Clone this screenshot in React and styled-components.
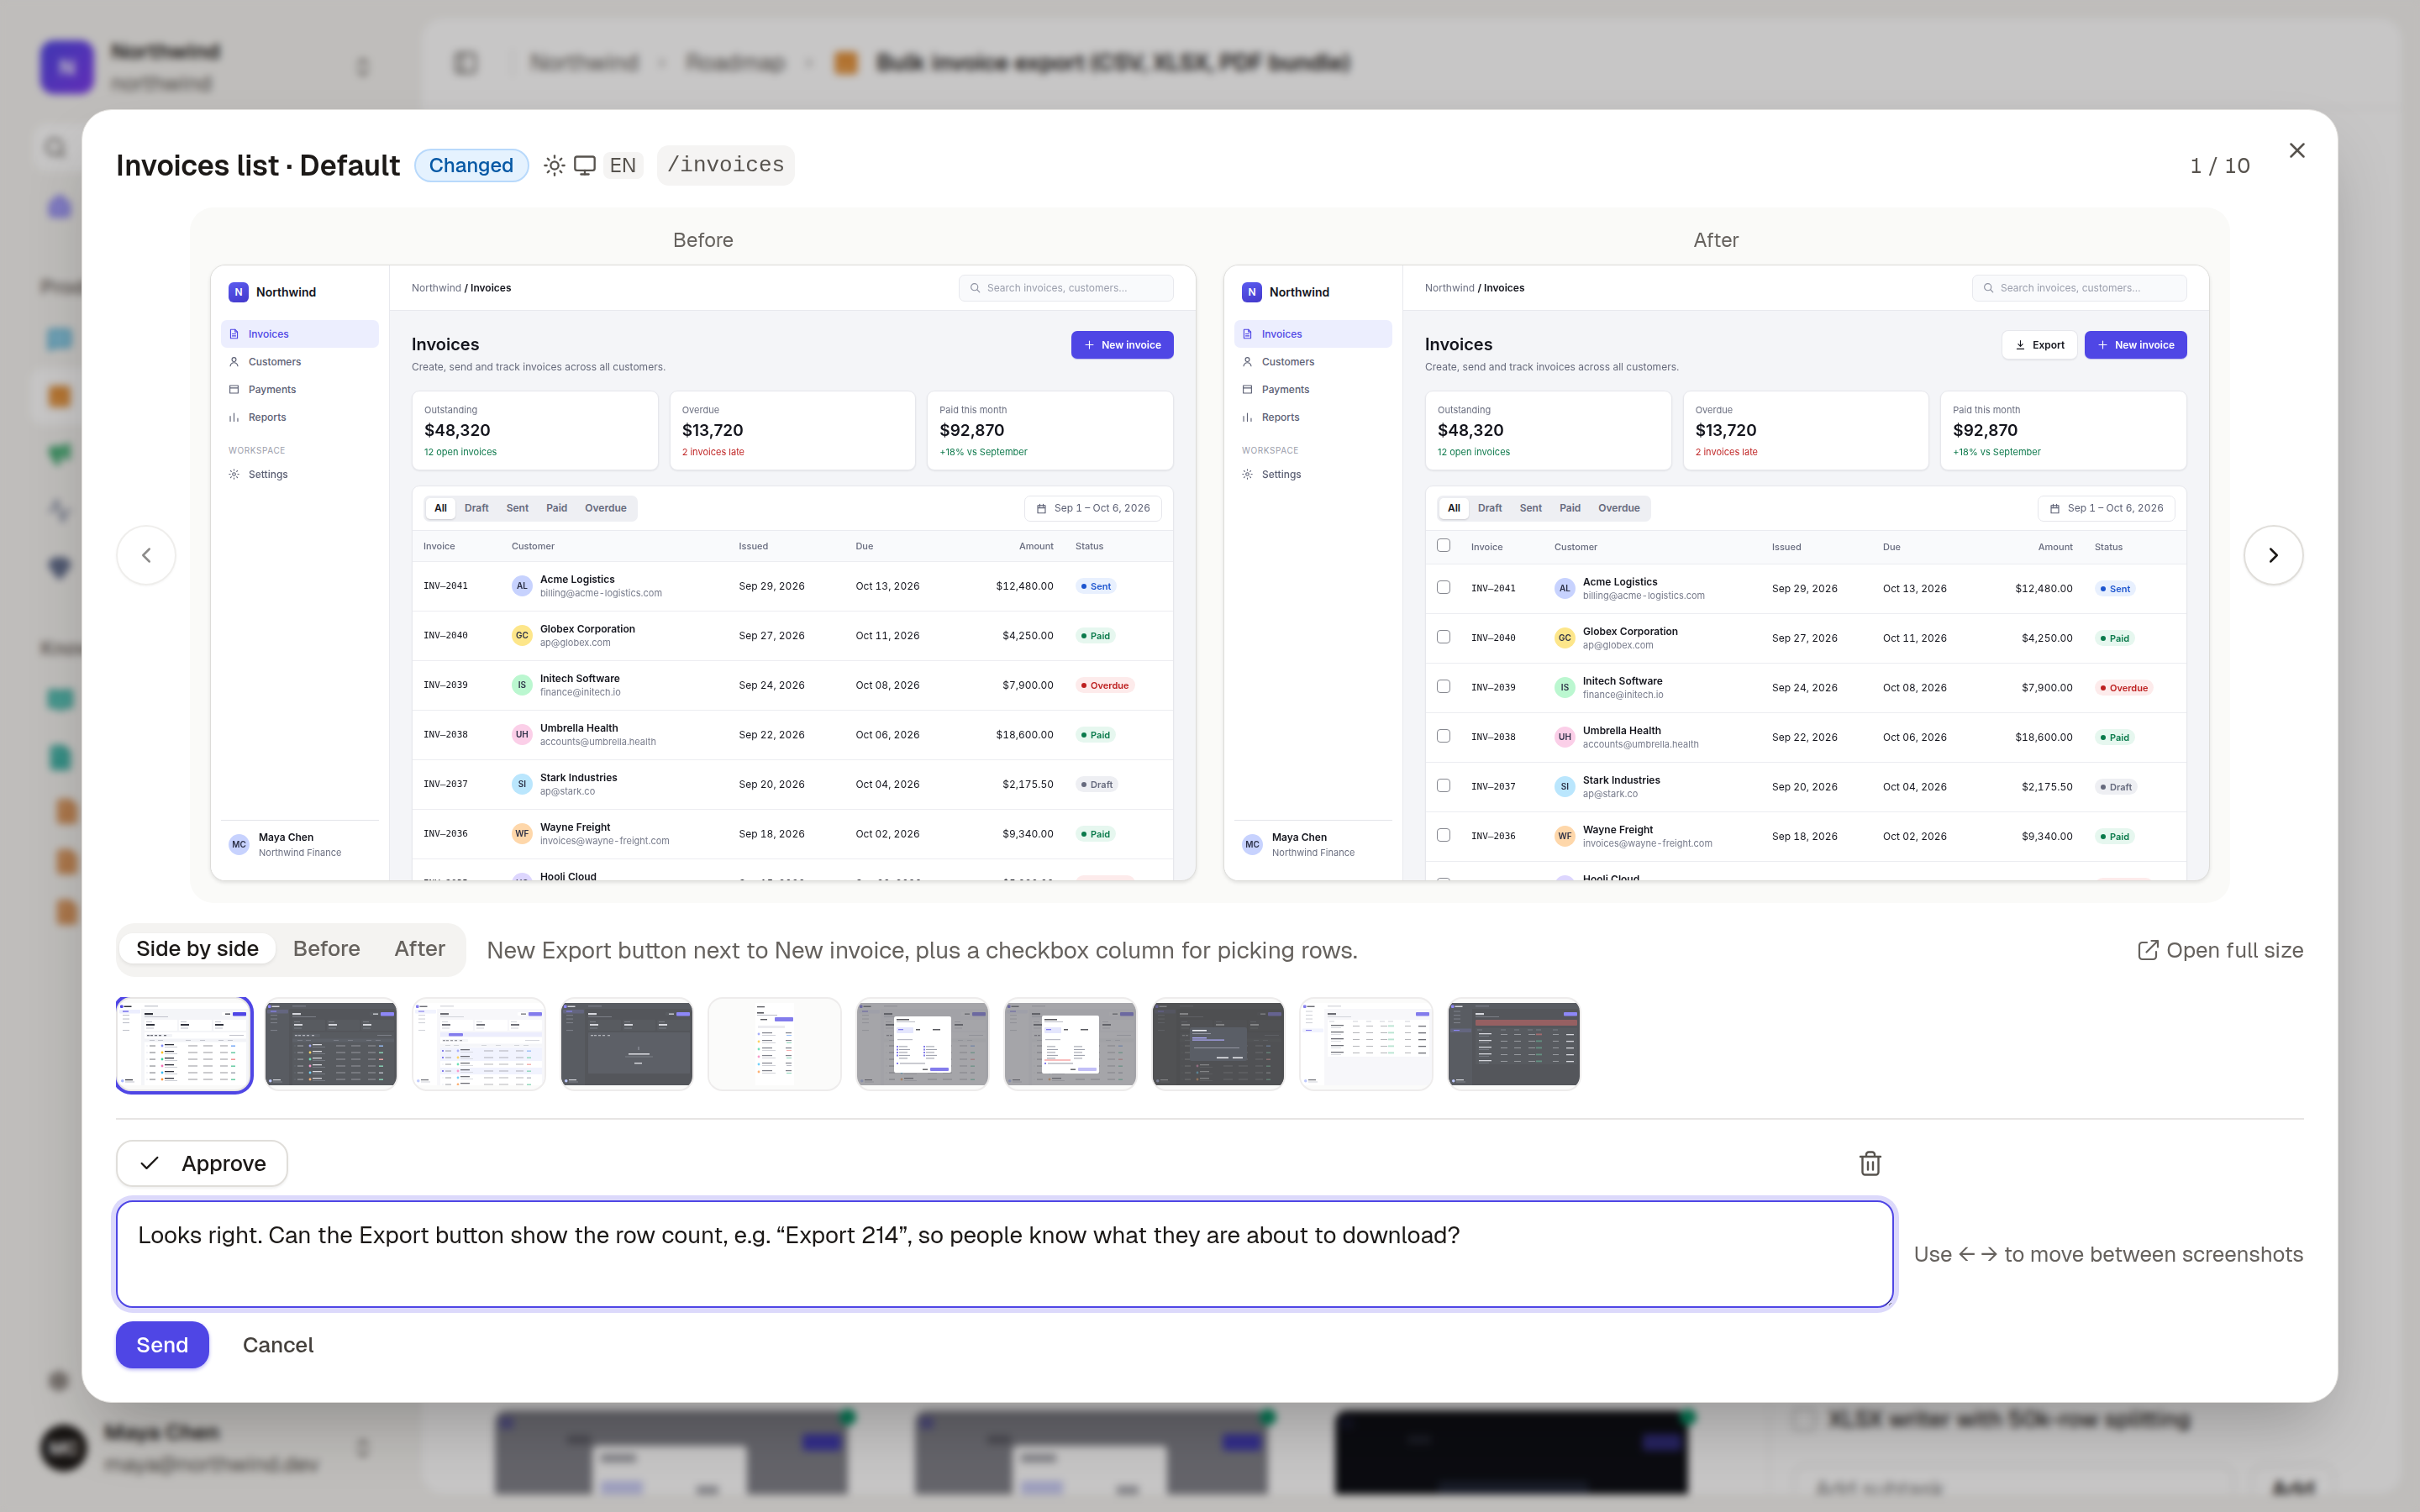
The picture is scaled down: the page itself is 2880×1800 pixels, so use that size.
import React from "react";
import styled, { createGlobalStyle, css } from "styled-components";
import { Sun, Monitor, X, ChevronLeft, ChevronRight, ChevronsUpDown, Check, Search, PanelLeft, House, Megaphone, Activity, Gem, BookOpen, FileText, Settings, SquareKanban, MessageSquare } from "lucide-react";

const Global = createGlobalStyle`
  *, *::before, *::after { box-sizing: border-box; }
  body { margin: 0; background: #f5f4f1; color: #1c1917; font-family: Geist, Inter, "Liberation Sans", sans-serif; -webkit-font-smoothing: antialiased; }
  button, input, textarea { font: inherit; color: inherit; }
  button { border: 0; padding: 0; background: none; cursor: pointer; }
  a { text-decoration: none; }
  h1, h2, h3, p { margin: 0; font-weight: inherit; font-size: inherit; }
`;

/* ---------- workspace behind the dialog ---------- */

const Shell = styled.div`
  display: flex;
  height: 100vh;
  overflow: hidden;
`;
const Side = styled.aside`
  flex: 0 0 500px;
  display: flex;
  flex-direction: column;
  padding: 42px 54px 38px 48px;
`;
const Account = styled.div`
  display: flex;
  align-items: center;
  gap: 20px;
  font-size: 26px;
  line-height: 38px;
  color: #57534e;
  strong { display: block; font-weight: 600; color: #1c1917; }
  svg { margin-left: auto; }
`;
const Mark = styled.span`
  width: 64px;
  height: 64px;
  border-radius: 16px;
  display: grid;
  place-items: center;
  color: #fff;
  font-weight: 600;
  background: linear-gradient(135deg, #4f46e5, #7c3aed);
  ${(p) => p.$round && css`width: 56px; height: 56px; border-radius: 50%; background: #1c1917; font-size: 22px;`}
`;
const SideItem = styled.a`
  display: flex;
  align-items: center;
  height: 68px;
  padding-left: 8px;
  margin-left: ${(p) => (p.$nested ? 8 : 0)}px;
  border-radius: 16px;
  color: ${(p) => p.$color};
  ${(p) => p.$active && css`margin-left: -12px; padding-left: 20px; background: #fff;`}
  ${(p) => p.$nested && css`height: 60px;`}
`;
const SideSearch = styled.label`
  display: flex;
  align-items: center;
  height: 56px;
  margin: 30px 0 8px -8px;
  padding-left: 12px;
  border-radius: 16px;
  background: #fff;
  color: #57534e;
`;
const SideLabel = styled.div`
  margin: 46px 0 12px;
  font-size: 24px;
  line-height: 32px;
  font-weight: 600;
  color: #78716c;
`;
const SideBottom = styled.div`
  margin-top: auto;
  display: flex;
  flex-direction: column;
  gap: 8px;
`;
const Page = styled.main`
  flex: 1;
  margin: 20px 20px 20px 0;
  background: #fff;
  border: 1px solid #e7e5e4;
  border-radius: 28px;
  overflow: hidden;
  display: flex;
  flex-direction: column;
`;
const Crumbs = styled.nav`
  display: flex;
  align-items: center;
  gap: 20px;
  height: 108px;
  padding: 0 38px;
  font-size: 27px;
  color: #57534e;
  border-bottom: 1px solid #e7e5e4;
  strong { font-weight: 600; color: #1c1917; }
`;
const CrumbRule = styled.span`
  width: 2px;
  height: 32px;
  margin-left: 20px;
  background: #e7e5e4;
`;
const PageBody = styled.div`
  flex: 1;
  display: flex;
  align-items: flex-end;
  padding-left: 28px;
`;
const Gallery = styled.div`
  flex: 1;
  display: grid;
  grid-template-columns: repeat(3, 1fr);
  gap: 40px;
  padding: 0 76px 0 40px;
`;
const Shot = styled.div`
  position: relative;
  height: 100px;
  padding: 0 20px;
`;
const ShotDot = styled.span`
  position: absolute;
  top: -2px;
  right: 10px;
  width: 20px;
  height: 20px;
  border-radius: 50%;
  background: #059669;
`;
const ShotArt = styled.svg`
  display: block;
  width: 100%;
  height: 100px;
`;
const Tasks = styled.section`
  flex: 0 0 754px;
  display: flex;
  flex-direction: column;
  gap: 36px;
  padding: 0 80px 0 28px;
  border-left: 1px solid #e7e5e4;
  font-size: 27px;
  label { display: flex; align-items: center; gap: 16px; font-weight: 500; }
  input[type="checkbox"] { width: 26px; height: 26px; margin: 0; }
`;
const AddRow = styled.div`
  display: flex;
  gap: 20px;
  height: 60px;
  margin-bottom: -24px;
  input { flex: 1; min-width: 0; border: 2px solid #e7e5e4; border-radius: 16px; padding: 0 24px; background: none; }
  button { width: 100px; border: 2px solid #e7e5e4; border-radius: 16px; font-weight: 600; }
`;

/* ---------- dialog ---------- */

const Overlay = styled.div`
  position: fixed;
  inset: 0;
  display: grid;
  align-items: center;
  padding: 0 97px;
  background: rgba(12, 10, 9, 0.23);
  backdrop-filter: blur(5px);
`;
const Dialog = styled.section`
  position: relative;
  display: flex;
  flex-direction: column;
  gap: 24px;
  padding: 40px;
  border: 1px solid #e2e0dd;
  border-radius: 36px;
  background: #fff;
  box-shadow: 0 40px 80px -20px rgba(0, 0, 0, 0.26);
  font-size: 26px;
  line-height: 36px;
`;
const Head = styled.header`
  display: flex;
  align-items: center;
  gap: 16px;
  height: 52px;
  padding-right: 64px;
  color: #57534e;
`;
const Title = styled.h1`
  && { font-size: 34px; font-weight: 600; }
  color: #1c1917;
`;
const Changed = styled.span`
  height: 40px;
  padding: 0 16px;
  border: 2px solid #b8d9fb;
  border-radius: 20px;
  background: #e5f2fe;
  color: #0759a5;
  font-size: 24px;
  font-weight: 500;
`;
const Env = styled.span`
  display: flex;
  align-items: center;
  gap: 8px;
`;
const Lang = styled.span`
  padding: 0 8px;
  border-radius: 8px;
  background: #f5f4f3;
  font-size: 24px;
  line-height: 32px;
`;
const Route = styled.code`
  padding: 0 12px;
  border-radius: 14px;
  background: #f5f4f3;
  font-family: "Liberation Mono", monospace;
  font-size: 26px;
  line-height: 48px;
`;
const Count = styled.span`
  margin-left: auto;
  font-variant-numeric: tabular-nums;
`;
const Close = styled.button`
  position: absolute;
  top: 32px;
  right: 32px;
  width: 32px;
  height: 32px;
  display: grid;
  place-items: center;
  color: #57534e;
`;
const Viewer = styled.div`
  display: flex;
  align-items: center;
  gap: 16px;
`;
const Arrow = styled.button`
  flex: 0 0 72px;
  height: 72px;
  display: grid;
  place-items: center;
  border: 2px solid #e0deda;
  border-radius: 50%;
  box-shadow: 0 1px 3px rgba(0, 0, 0, 0.08);
  color: #1c1917;
  &:disabled { opacity: 0.5; color: #1c1917; }
`;
const Stage = styled.div`
  flex: 1;
  display: grid;
  grid-template-columns: 1fr 1fr;
  gap: 32px;
  padding: 24px 24px 26px;
  border-radius: 28px;
  background: #fafaf8;
`;
const Figure = styled.figure`
  margin: 0;
  min-width: 0;
  figcaption { height: 44px; text-align: center; font-size: 24px; line-height: 30px; color: #66625e; }
`;

/* ---------- invoice application shown in the two frames ---------- */

const Frame = styled.div`
  display: flex;
  aspect-ratio: 16 / 10;
  overflow: hidden;
  border: 1px solid #dddcd9;
  border-radius: 18px;
  background: #f4f5f8;
  box-shadow: 0 2px 4px rgba(0, 0, 0, 0.1);
  font-family: Inter, "Liberation Sans", sans-serif;
  font-size: 12px;
  line-height: 16px;
  color: #14151d;
`;
const AppSide = styled.aside`
  flex: 0 0 213px;
  display: flex;
  flex-direction: column;
  padding: 20px 12px;
  background: #fff;
  border-right: 1px solid #e8e9ee;
`;
const Brand = styled.div`
  display: flex;
  align-items: center;
  gap: 9px;
  height: 24px;
  margin: 0 9px 21px;
  font-size: 14px;
  font-weight: 600;
  span { width: 24px; height: 24px; border-radius: 6px; display: grid; place-items: center; background: linear-gradient(160deg, #5b5cf0, #4338ca); color: #fff; font-size: 12px; }
`;
const AppLink = styled.a`
  display: flex;
  align-items: center;
  gap: 11px;
  height: 33px;
  padding: 0 9px;
  border-radius: 7px;
  font-size: 12px;
  font-weight: 500;
  color: ${(p) => (p.$active ? "#4f46e5" : "#5c6074")};
  background: ${(p) => (p.$active ? "#eceefe" : "none")};
`;
const AppLabel = styled.div`
  padding: 15px 9px 4px;
  font-size: 10px;
  letter-spacing: 0.06em;
  color: #9a9dab;
  text-transform: uppercase;
`;
const AppUser = styled.div`
  display: flex;
  align-items: center;
  gap: 11px;
  margin-top: auto;
  padding: 10px 9px 3px;
  border-top: 1px solid #e3e4e9;
  font-size: 11px;
  line-height: 19px;
  color: #6b6f80;
  strong { display: block; font-size: 12px; font-weight: 600; color: #14151d; }
`;
const Avatar = styled.span`
  flex: none;
  width: 25px;
  height: 25px;
  border-radius: 50%;
  display: grid;
  place-items: center;
  background: ${(p) => p.$bg};
  color: #2b2f45;
  font-size: 10px;
  font-weight: 600;
`;
const AppMain = styled.div`
  flex: 1;
  min-width: 0;
`;
const AppTop = styled.div`
  display: flex;
  align-items: center;
  justify-content: space-between;
  height: 54px;
  padding: 0 26px;
  background: #fff;
  border-bottom: 1px solid #e8e9ee;
  color: #6b6f80;
  strong { font-weight: 600; color: #14151d; }
`;
const Field = styled.label`
  display: flex;
  align-items: center;
  gap: 8px;
  width: 256px;
  height: 32px;
  padding: 0 12px;
  border: 1px solid #e8e9ee;
  border-radius: 7px;
  background: #f9fafc;
  color: #8d91a0;
  input { flex: 1; min-width: 0; border: 0; padding: 0; background: none; outline: 0; }
  input::placeholder { color: #9a9eac; opacity: 1; }
`;
const AppBody = styled.div`
  padding: 24px 26px 0;
`;
const Intro = styled.div`
  display: flex;
  align-items: flex-start;
  gap: 9px;
  height: 71px;
  div { margin-right: auto; color: #666a7b; }
  h2 { margin-bottom: 3px; font-size: 20px; line-height: 32px; font-weight: 600; color: #14151d; }
`;
const AppButton = styled.button`
  display: flex;
  align-items: center;
  gap: 8px;
  height: 33px;
  padding: 0 15px;
  border-radius: 7px;
  font-weight: 600;
  color: ${(p) => (p.$primary ? "#fff" : "#14151d")};
  background: ${(p) => (p.$primary ? "#4f46e5" : "#fff")};
  box-shadow: ${(p) => (p.$primary ? "0 1px 1px rgba(67,56,202,.3)" : "0 0 0 1px #e6e7ec, 0 2px 2px rgba(20,21,29,.08)")};
`;
const Stats = styled.div`
  display: grid;
  grid-template-columns: repeat(3, 1fr);
  gap: 13px;
  margin-bottom: 18px;
`;
const Stat = styled.div`
  height: 95px;
  padding: 14px;
  border: 1px solid #e6e7ec;
  border-radius: 9px;
  background: #fff;
  box-shadow: 0 1px 2px rgba(20, 21, 29, 0.08);
  font-size: 11px;
  color: #6b6f80;
  strong { display: block; margin: 4px 0 5px; font-size: 19px; line-height: 25px; font-weight: 600; color: #14151d; }
  span { display: block; color: ${(p) => (p.$bad ? "#c02626" : "#0f7a4d")}; }
`;
const Card = styled.div`
  border: 1px solid #e6e7ec;
  border-radius: 9px;
  background: #fff;
  box-shadow: 0 1px 2px rgba(20, 21, 29, 0.06);
  overflow: hidden;
`;
const CardBar = styled.div`
  display: flex;
  justify-content: space-between;
  align-items: center;
  height: 53px;
  padding: 0 13px;
  border-bottom: 1px solid #eaebf0;
`;
const Filters = styled.div`
  display: flex;
  gap: 1px;
  height: 31px;
  padding: 3px;
  border-radius: 7px;
  background: #eeeff3;
`;
const Filter = styled.button`
  padding: 0 10px;
  border-radius: 5px;
  font-size: 12px;
  font-weight: 600;
  color: ${(p) => (p.$active ? "#14151d" : "#666a7d")};
  background: ${(p) => (p.$active ? "#fff" : "none")};
  box-shadow: ${(p) => (p.$active ? "0 1px 2px rgba(20,21,29,.16)" : "none")};
`;
const Range = styled.button`
  display: flex;
  align-items: center;
  gap: 9px;
  height: 31px;
  padding: 0 13px;
  border: 1px solid #e6e7ec;
  border-radius: 7px;
  font-variant-numeric: tabular-nums;
  color: #5c6074;
`;
const Grid = styled.table`
  width: 100%;
  table-layout: fixed;
  border-collapse: collapse;
  th, td { padding: 0 0 0 13px; text-align: left; white-space: nowrap; border-bottom: 1px solid #ecedf1; }
  th { height: ${(p) => (p.$select ? 39 : 36)}px; background: #f9fafc; font-size: 11px; font-weight: 500; color: #666a7d; }
  td { height: 59px; font-variant-numeric: tabular-nums; }
  th.num, td.num { padding: 0 13px 0 0; text-align: right; }
  td.mono { font-family: "DejaVu Sans Mono", "Liberation Mono", monospace; font-size: 11px; }
`;
const Tick = styled.input`
  appearance: none;
  display: block;
  width: 16px;
  height: 16px;
  margin: 0 0 4px;
  border: 1px solid #85878f;
  border-radius: 4px;
  background: #fff;
`;
const Customer = styled.div`
  display: flex;
  align-items: center;
  gap: 9px;
  font-size: 11px;
  line-height: 17px;
  color: #777b8b;
  strong { display: block; font-size: 12px; font-weight: 600; color: #14151d; }
`;
const tones = {
  Sent: ["#e8f0fe", "#1d55cf"],
  Paid: ["#e6f7ef", "#0a7a4b"],
  Overdue: ["#fdebeb", "#bd2020"],
  Draft: ["#eeeff3", "#666a7d"],
};
const Status = styled.span`
  display: inline-flex;
  align-items: center;
  gap: 5px;
  height: 19px;
  padding: 0 7px;
  border-radius: 10px;
  font-size: 11px;
  font-weight: 600;
  background: ${(p) => tones[p.$tone][0]};
  color: ${(p) => tones[p.$tone][1]};
  &::before { content: ""; width: 6px; height: 6px; border-radius: 50%; background: currentColor; }
`;

const paths = {
  invoice: <><path d="M3 1.500h6.500L13 5v9.500H3z" /><path d="M9.500 1.500V5H13M5.500 8h5M5.500 11h5" /></>,
  user: <><circle cx="8" cy="5" r="3" /><path d="M2.500 14.500c.6-3.400 2.600-5 5.500-5s4.900 1.600 5.500 5" /></>,
  card: <path d="M2 2.500h12v11H2zM2 6h12" />,
  bars: <path d="M2.500 14V7M8 14V2.500M13.500 14V10" />,
  gear: <><circle cx="8" cy="8" r="2.200" /><path d="M8 1v1.500M8 13.500V15M1 8h1.500M13.500 8H15M3 3l1.100 1.100M11.900 11.900L13 13M3 13l1.100-1.100M11.900 4.100L13 3" /></>,
  search: <><circle cx="7" cy="7" r="5" /><path d="M10.800 10.800L14.500 14.500" /></>,
  plus: <path d="M8 2.500v11M2.500 8h11" />,
  down: <path d="M8 2v8M4.800 7L8 10.200 11.200 7M3 14h10" />,
  calendar: <path d="M2.500 3.500h11v11h-11zM2.500 7h11M5.500 1.500v3.500M10.500 1.500v3.500" />,
};
const Glyph = ({ name, size = 13 }) => (
  <svg width={size} height={size} viewBox="0 0 16 16" fill="none" stroke="currentColor" strokeWidth="1.400" strokeLinecap="round" strokeLinejoin="round" aria-hidden="true">
    {paths[name]}
  </svg>
);

const rows = [
  ["INV–2041", "AL", "#c7d2fe", "Acme Logistics", "billing@acme-logistics.com", "Sep 29, 2026", "Oct 13, 2026", "$12,480.00", "Sent"],
  ["INV–2040", "GC", "#fde68a", "Globex Corporation", "ap@globex.com", "Sep 27, 2026", "Oct 11, 2026", "$4,250.00", "Paid"],
  ["INV–2039", "IS", "#bbf7d0", "Initech Software", "finance@initech.io", "Sep 24, 2026", "Oct 08, 2026", "$7,900.00", "Overdue"],
  ["INV–2038", "UH", "#fbcfe8", "Umbrella Health", "accounts@umbrella.health", "Sep 22, 2026", "Oct 06, 2026", "$18,600.00", "Paid"],
  ["INV–2037", "SI", "#bae6fd", "Stark Industries", "ap@stark.co", "Sep 20, 2026", "Oct 04, 2026", "$2,175.50", "Draft"],
  ["INV–2036", "WF", "#fed7aa", "Wayne Freight", "invoices@wayne-freight.com", "Sep 18, 2026", "Oct 02, 2026", "$9,340.00", "Paid"],
  ["INV–2035", "HC", "#ddd6fe", "Hooli Cloud", "billing@hooli.cloud", "Sep 15, 2026", "Sep 29, 2026", "$5,020.00", "Overdue"],
];

function InvoiceApp({ withExport }) {
  const widths = withExport ? [41, 99, 259, 132, 122, 130, 122] : [105, 271, 139, 126, 136, 129];
  const total = widths.reduce((a, b) => a + b, 0);
  return (
    <Frame>
      <AppSide>
        <Brand><span>N</span>Northwind</Brand>
        <AppLink $active href="#invoices"><Glyph name="invoice" />Invoices</AppLink>
        <AppLink href="#customers"><Glyph name="user" />Customers</AppLink>
        <AppLink href="#payments"><Glyph name="card" />Payments</AppLink>
        <AppLink href="#reports"><Glyph name="bars" />Reports</AppLink>
        <AppLabel>Workspace</AppLabel>
        <AppLink href="#settings"><Glyph name="gear" />Settings</AppLink>
        <AppUser>
          <Avatar $bg="#c7d2fe">MC</Avatar>
          <div><strong>Maya Chen</strong>Northwind Finance</div>
        </AppUser>
      </AppSide>
      <AppMain>
        <AppTop>
          <div>Northwind <strong>/ Invoices</strong></div>
          <Field><Glyph name="search" /><input type="search" aria-label="Search" placeholder="Search invoices, customers…" /></Field>
        </AppTop>
        <AppBody>
          <Intro>
            <div><h2>Invoices</h2><p>Create, send and track invoices across all customers.</p></div>
            {withExport && <AppButton><Glyph name="down" />Export</AppButton>}
            <AppButton $primary><Glyph name="plus" />New invoice</AppButton>
          </Intro>
          <Stats>
            <Stat>Outstanding<strong>$48,320</strong><span>12 open invoices</span></Stat>
            <Stat $bad>Overdue<strong>$13,720</strong><span>2 invoices late</span></Stat>
            <Stat>Paid this month<strong>$92,870</strong><span>+18% vs September</span></Stat>
          </Stats>
          <Card>
            <CardBar>
              <Filters>
                {["All", "Draft", "Sent", "Paid", "Overdue"].map((f, i) => <Filter key={f} $active={i === 0}>{f}</Filter>)}
              </Filters>
              <Range><Glyph name="calendar" />Sep 1 – Oct 6, 2026</Range>
            </CardBar>
            <Grid $select={withExport}>
              <colgroup>{widths.map((w, i) => <col key={i} style={{ width: `${(w / total) * 100}%` }} />)}</colgroup>
              <thead>
                <tr>
                  {withExport && <th><Tick type="checkbox" aria-label="Select all invoices" /></th>}
                  <th>Invoice</th><th>Customer</th><th>Issued</th><th>Due</th><th className="num">Amount</th><th>Status</th>
                </tr>
              </thead>
              <tbody>
                {rows.map(([id, initials, bg, name, mail, issued, due, amount, status]) => (
                  <tr key={id}>
                    {withExport && <td><Tick type="checkbox" aria-label={`Select ${id}`} /></td>}
                    <td className="mono">{id}</td>
                    <td><Customer><Avatar $bg={bg}>{initials}</Avatar><div><strong>{name}</strong>{mail}</div></Customer></td>
                    <td>{issued}</td><td>{due}</td><td className="num">{amount}</td>
                    <td><Status $tone={status}>{status}</Status></td>
                  </tr>
                ))}
              </tbody>
            </Grid>
          </Card>
        </AppBody>
      </AppMain>
    </Frame>
  );
}

/* ---------- dialog, lower half ---------- */

const Info = styled.div`
  display: flex;
  align-items: center;
  gap: 24px;
  color: #66625e;
`;
const Modes = styled.div`
  display: flex;
  align-items: flex-start;
  height: 64px;
  padding: 12px 4px;
  border-radius: 22px;
  background: #f4f3f1;
`;
const Mode = styled.button`
  height: 36px;
  padding: 0 20px;
  border-radius: 16px;
  font-size: 26px;
  line-height: 34px;
  font-weight: 500;
  color: ${(p) => (p.$active ? "#1c1917" : "#66625e")};
  background: ${(p) => (p.$active ? "#fff" : "none")};
  box-shadow: ${(p) => (p.$active ? "0 2px 4px rgba(0,0,0,.08)" : "none")};
`;
const Note = styled.p`
  && { font-size: 28px; }
`;
const FullSize = styled.a`
  display: flex;
  align-items: center;
  gap: 8px;
  margin-left: auto;
  color: inherit;
`;
const Strip = styled.div`
  display: flex;
  gap: 16px;
  overflow: hidden;
  padding-bottom: 8px;
`;
const Thumb = styled.button`
  flex: 0 0 160px;
  height: 112px;
  display: grid;
  place-items: center;
  border: 2px solid #e7e5e4;
  border-radius: 18px;
  overflow: hidden;
  background: #fafaf9;
  opacity: ${(p) => (p.$active ? 1 : 0.7)};
  ${(p) => p.$active && css`box-shadow: 0 0 0 4px #4f46e5;`}
  svg { display: block; width: 100%; height: auto; }
`;
const Review = styled.div`
  display: flex;
  align-items: center;
  gap: 24px;
  padding-top: 24px;
  border-top: 2px solid #e7e5e4;
  color: #66625e;
`;
const Form = styled.form`
  flex: 1;
  display: flex;
  flex-direction: column;
  gap: 16px;
`;
const Line = styled.div`
  display: flex;
  align-items: center;
  gap: 16px;
`;
const Action = styled.button`
  display: flex;
  align-items: center;
  gap: 24px;
  height: 56px;
  padding: 0 24px;
  border-radius: 20px;
  font-size: 26px;
  font-weight: 500;
  color: #44403c;
  ${(p) => p.$kind === "outline" && css`border: 2px solid #e0deda; color: #1c1917; box-shadow: 0 2px 3px rgba(0,0,0,.06);`}
  ${(p) => p.$kind === "primary" && css`background: #4f46e5; color: #fff; box-shadow: 0 2px 4px rgba(79,70,229,.4);`}
`;
const Trash = styled.button`
  width: 56px;
  height: 56px;
  margin-left: auto;
  display: grid;
  place-items: center;
  color: #57534e;
`;
const Comment = styled.textarea`
  display: block;
  width: 100%;
  height: 128px;
  padding: 20px 24px;
  border: 2px solid #4f46e5;
  border-radius: 20px;
  outline: 0;
  resize: vertical;
  font-size: 28px;
  line-height: 38px;
  color: #1c1917;
  background: #fff;
  box-shadow: 0 0 0 6px #dcd9fb;
`;

const IconTrash = () => (
  <svg width="32" height="32" viewBox="0 0 32 32" fill="none" stroke="currentColor" strokeWidth="2.400" strokeLinecap="round" strokeLinejoin="round" aria-hidden="true">
    <path d="M4 8h24M6.500 8v18.500a3 3 0 0 0 3 3h13a3 3 0 0 0 3-3V8M11 8V5.500a3 3 0 0 1 3-3h4a3 3 0 0 1 3 3V8M13 14.500v9M19 14.500v9" />
  </svg>
);
const IconOpen = () => (
  <svg width="28" height="28" viewBox="0 0 28 28" fill="none" stroke="currentColor" strokeWidth="2.200" strokeLinecap="round" strokeLinejoin="round" aria-hidden="true">
    <path d="M12 5H6.500A3.500 3.500 0 0 0 3 8.500v13A3.500 3.500 0 0 0 6.500 25h13a3.500 3.500 0 0 0 3.500-3.500V16M17.500 3H25v7.500M25 3L11.500 16.500" />
  </svg>
);

/* Miniature drawings of each captured screen. */
const light = { bg: "#f4f5f8", side: "#fff", card: "#fff", ink: "#30323c", dim: "#c0c2cb", acc: "#4f46e5", soft: "#eceefe", head: "#f2f3f7" };
const dark = { bg: "#0c0f16", side: "#141821", card: "#12161e", ink: "#c4c6ce", dim: "#454a57", acc: "#5d55f5", soft: "#23264a", head: "#1b202a" };
const dots = ["#818cf8", "#fbbf24", "#34d399", "#f472b6", "#38bdf8", "#fb923c"];
const pills = ["#6ea3f5", "#5cc79d", "#f08a8a", "#5cc79d", "#9ea1ae", "#5cc79d"];

function Chrome({ c, exportBtn = true, on = 0 }) {
  return (
    <>
      <rect width="156" height="98" fill={c.bg} />
      <rect width="28" height="98" fill={c.side} />
      <rect x="28" width="128" height="7" fill={c.side} />
      <rect x="3" y="2.500" width="3.500" height="3.500" rx="1" fill={c.acc} />
      <rect x="7.500" y="3.500" width="9" height="1.500" fill={c.ink} />
      <rect x="2" y={8 + on * 4.500} width="25" height="4.500" rx="1" fill={c.soft} />
      {[0, 1, 2, 3, 5].map((i) => <rect key={i} x="6" y={9.500 + i * 4.500} width={i === on ? 7 : 8} height="1.100" fill={i === on ? c.acc : c.dim} />)}
      <rect x="32" y="3.200" width="16" height="1.200" fill={c.dim} />
      <rect x="32" y="12" width="10" height="2.200" fill={c.ink} />
      <rect x="32" y="16" width="28" height="1" fill={c.dim} />
      {exportBtn && <rect x="124" y="11" width="11" height="4" rx="1" fill={c.card} />}
      {exportBtn && <rect x="128" y="12.500" width="6" height="1.300" fill={c.ink} />}
      <rect x="137" y="11" width="16" height="4.500" rx="1" fill={c.acc} />
      <rect x="4" y="91" width="3.500" height="3.500" rx="1.700" fill="#a5b4fc" />
      <rect x="9" y="91" width="9" height="1.200" fill={c.ink} />
      <rect x="9" y="93.500" width="11" height="1" fill={c.dim} />
    </>
  );
}
const Totals = ({ c }) => [32, 73, 114].map((x) => (
  <g key={x}>
    <rect x={x} y="20" width="39" height="13" rx="1" fill={c.card} />
    <rect x={x + 2} y="22" width="7" height="1" fill={c.dim} />
    <rect x={x + 2} y="25" width="10" height="2" fill={c.ink} />
    <rect x={x + 2} y="29.500" width="9" height="1" fill={c.dim} />
  </g>
));
function Lines({ c, y = 46, tint = [], count = 6 }) {
  return (
    <>
      <rect x="32" y={y - 11} width="121" height={98 - y + 11} fill={c.card} />
      <rect x="34" y={y - 9} width="31" height="3.500" rx="1" fill={c.head} />
      {[35, 39, 44, 49, 55].map((x) => <rect key={x} x={x} y={y - 8} width="3" height="1.300" fill={c.ink} opacity=".7" />)}
      <rect x="133" y={y - 8} width="17" height="1" fill={c.dim} />
      <rect x="32" y={y - 3.500} width="121" height="4" fill={c.head} />
      {[38, 48, 81, 98, 120, 131].map((x) => <rect key={x} x={x} y={y - 2} width="6" height="1" fill={c.dim} />)}
      {Array.from({ length: count }, (_, i) => {
        const ry = y + 1 + i * 8;
        return (
          <g key={i}>
            {tint.includes(i) && <rect x="32" y={ry} width="121" height="8" fill={c.soft} />}
            <rect x="34" y={ry + 3} width="2" height="2" fill={tint.includes(i) ? c.acc : c.head} />
            <rect x="38" y={ry + 3.500} width="7" height="1.100" fill={c.ink} opacity=".6" />
            <circle cx="53" cy={ry + 4} r="1.400" fill={dots[i]} />
            <rect x="56" y={ry + 2} width="11" height="1.300" fill={c.ink} />
            <rect x="56" y={ry + 5} width="15" height="0.800" fill={c.dim} />
            <rect x="84" y={ry + 3.500} width="11" height="1" fill={c.ink} opacity=".5" />
            <rect x="102" y={ry + 3.500} width="11" height="1" fill={c.ink} opacity=".5" />
            <rect x="122" y={ry + 3.500} width="9" height="1" fill={c.ink} opacity=".5" />
            <rect x="135" y={ry + 3.500} width="5" height="1.400" fill={pills[i]} />
          </g>
        );
      })}
    </>
  );
}
function ExportSheet({ error }) {
  return (
    <>
      <rect x="44" y={error ? 15 : 16} width="68" height={error ? 69 : 67} rx="2" fill="#fff" />
      <rect x="47" y="19" width="15" height="1.600" fill="#14151d" />
      <rect x="47" y="22" width="22" height="1" fill="#9ea1ae" />
      <rect x="47" y="29" width="20" height="7" rx="1" fill="#d9dcfd" />
      <rect x="49" y="31" width="6" height="1.300" fill="#4f46e5" />
      <rect x="70" y="31" width="5" height="1.500" fill="#14151d" />
      <rect x="90" y="31" width="9" height="1.500" fill="#14151d" />
      <rect x="48" y="43" width="18" height="1.200" fill="#9ea1ae" />
      {[51, 54.500, 58, 61.500, 65].map((y, i) => [47, 79].map((x) => (
        <g key={x + "-" + y}>
          {!error && i < 4 && <rect x={x} y={y} width="2" height="2" fill="#4f46e5" />}
          <rect x={x + 3} y={y + 0.400} width={10 + (i % 2) * 3} height="1" fill="#6b6f80" />
        </g>
      )))}
      {error && <rect x="47" y="67.500" width="31" height="1" fill="#ef4444" />}
      <rect x="47" y="71" width="2" height="2" fill="#4f46e5" />
      <rect x="51" y="71.500" width="30" height="1" fill="#6b6f80" />
      <rect x="78" y="78.500" width="6" height="1.400" fill="#14151d" />
      <rect x="87" y="77" width="22" height="4" rx="1" fill={error ? "#a9a5f5" : "#4f46e5"} />
    </>
  );
}
function ExportHistory({ c, danger }) {
  const top = danger ? 30 : 20;
  return (
    <>
      <Chrome c={c} exportBtn={false} on={5} />
      {danger && <rect x="32" y="20" width="121" height="7" rx="1" fill="#6a1d20" />}
      <rect x="32" y={top} width="121" height={danger ? 43 : 44} fill={c.card} />
      {[34, 62, 78, 94, 104, 124].map((x) => <rect key={x} x={x} y={top + 1.500} width="6" height="1" fill={c.dim} />)}
      {[0, 1, 2, 3, 4].map((i) => {
        const y = top + 6 + i * 8;
        return (
          <g key={i}>
            <rect x="36" y={y} width="15" height="1.300" fill={c.ink} />
            <rect x="36" y={y + 3} width="12" height="0.800" fill={c.dim} />
            {[62, 78, 95].map((x) => <rect key={x} x={x} y={y + 1} width="8" height="1" fill={c.ink} opacity=".5" />)}
            <rect x="104" y={y + 0.500} width="7" height="1.800" fill={danger && i === 0 ? "#ef4444" : "#34b37e"} opacity=".5" />
            <rect x="124" y={y + 1} width="7" height="1" fill={c.ink} opacity=".5" />
            <rect x="140" y={y + 1} width="9" height="1.300" fill={c.ink} />
          </g>
        );
      })}
    </>
  );
}
const scenes = [
  ["Default, light", <><Chrome c={light} /><Totals c={light} /><Lines c={light} /></>],
  ["Default, dark", <><Chrome c={dark} /><Totals c={dark} /><Lines c={dark} /></>],
  ["Rows selected", <><Chrome c={light} /><Totals c={light} /><Lines c={light} y={52} tint={[0, 1, 3]} /><rect x="32" y="35" width="121" height="5" fill="#e4e6fd" /><rect x="42" y="36" width="17" height="3.500" rx="1" fill="#4f46e5" /></>],
  ["Empty", <><Chrome c={dark} /><Totals c={dark} /><rect x="32" y="35" width="121" height="49" rx="1" fill="#1a1e27" />{[35, 39, 44, 49, 55].map((x) => <rect key={x} x={x} y="38" width="3" height="1.300" fill={dark.ink} opacity=".7" />)}<rect x="91" y="52" width="2" height="4" fill={dark.dim} /><rect x="80" y="60" width="25" height="1.600" fill={dark.ink} /><rect x="76" y="63.500" width="33" height="1" fill={dark.dim} /><rect x="87" y="71" width="9" height="1.500" fill={dark.ink} /></>],
  ["Mobile", <><rect width="156" height="98" fill="#fafaf9" /><rect x="55" width="46" height="98" fill="#fff" /><rect x="57" y="4" width="9" height="1.300" fill="#14151d" /><rect x="57" y="11" width="8" height="1.600" fill="#14151d" /><rect x="57" y="14" width="24" height="1" fill="#9ea1ae" /><rect x="61" y="19" width="8" height="1.400" fill="#14151d" /><rect x="78" y="17" width="22" height="5" rx="1" fill="#4f46e5" /><rect x="58" y="27" width="32" height="3" fill="#e4e5ea" />{[0, 1, 2, 3, 4, 5].map((i) => <g key={i}><circle cx="59" cy={37 + i * 9} r="1.400" fill={dots[i]} /><rect x="63" y={35 + i * 9} width="12" height="1.200" fill="#4b4e5c" /><rect x="63" y={38 + i * 9} width="16" height="0.800" fill="#b0b2bd" /><rect x="91" y={35 + i * 9} width="7" height="1.200" fill="#4b4e5c" /><rect x="92" y={38 + i * 9} width="6" height="1" fill={pills[i]} /></g>)}</>],
  ["Export dialog", <><Chrome c={light} /><Totals c={light} /><Lines c={light} /><rect width="156" height="98" fill="#14151d" opacity=".54" /><ExportSheet /></>],
  ["Export dialog, error", <><Chrome c={light} /><Totals c={light} /><Lines c={light} /><rect width="156" height="98" fill="#14151d" opacity=".54" /><ExportSheet error /></>],
  ["Export progress", <><Chrome c={dark} /><Totals c={dark} /><Lines c={dark} /><rect width="156" height="98" fill="#000" opacity=".6" /><rect x="44" y="29" width="68" height="40" rx="2" fill="#151b26" /><rect x="47" y="32" width="17" height="1.600" fill="#e8e9ee" /><rect x="47" y="36" width="22" height="1" fill="#666b7a" /><rect x="47" y="41" width="17" height="1.400" fill="#8b87f8" /><rect x="47" y="43.500" width="38" height="1.200" fill="#8b87f8" /><rect x="49" y="53" width="54" height="1" fill="#666b7a" /><rect x="76" y="64.500" width="14" height="1.500" fill="#e8e9ee" /><rect x="95" y="64.500" width="12" height="1.500" fill="#e8e9ee" /></>],
  ["Exports", <ExportHistory c={light} />],
  ["Exports, failed", <ExportHistory c={dark} danger />],
];

const BackShot = ({ night }) => (
  <Shot>
    <ShotArt viewBox="0 0 420 100" preserveAspectRatio="none">
      <rect width="420" height="120" rx="14" fill={night ? "#0c0e14" : "#808189"} />
      <rect x="6" y="8" width="16" height="14" fill={night ? "#15172a" : "#5c5a96"} />
      <rect x="366" y="28" width="46" height="20" rx="4" fill={night ? "#2f2c7a" : "#3f3ab0"} />
      {night ? <rect x="122" y="84" width="180" height="30" rx="6" fill="#1b2130" /> : <rect x="116" y="42" width="184" height="80" rx="6" fill="#fff" />}
      {!night && <rect x="126" y="52" width="42" height="10" fill="#a5a6ad" />}
      {!night && <rect x="126" y="84" width="50" height="20" fill="#c9ccf5" />}
      {!night && <rect x="240" y="90" width="26" height="10" fill="#a5a6ad" />}
      <rect x="86" y="30" width="28" height="10" fill={night ? "#20232e" : "#5c5d66"} />
    </ShotArt>
    <ShotDot />
  </Shot>
);

function Workspace() {
  return (
    <Shell aria-hidden="true">
      <Side>
        <Account><Mark>N</Mark><div><strong>Northwind</strong>northwind</div><ChevronsUpDown size={28} /></Account>
        <SideSearch><Search size={28} /></SideSearch>
        <SideItem $color="#6d64f0" href="#home"><House size={30} fill="#a5a0f8" /></SideItem>
        <SideLabel>Product</SideLabel>
        <SideItem $color="#38a3cf" href="#inbox"><MessageSquare size={30} fill="#8fcfe8" /></SideItem>
        <SideItem $color="#d97d1c" $active href="#roadmap"><SquareKanban size={30} fill="#e9a050" /></SideItem>
        <SideItem $color="#2f9e63" href="#news"><Megaphone size={30} fill="#5cbf88" /></SideItem>
        <SideItem $color="#64708f" href="#activity"><Activity size={30} /></SideItem>
        <SideItem $color="#64708f" href="#quality"><Gem size={30} fill="#64708f" /></SideItem>
        <SideLabel>Knowledge</SideLabel>
        <SideItem $color="#1d9d90" href="#docs"><BookOpen size={32} fill="#5cc4b8" /></SideItem>
        <SideItem $color="#1d9d90" href="#notes"><FileText size={32} fill="#5cc4b8" /></SideItem>
        {["a", "b", "c"].map((k) => <SideItem key={k} $nested $color="#cf8445" href={"#page-" + k}><FileText size={32} fill="#e0a470" /></SideItem>)}
        <SideBottom>
          <SideItem $color="#78716c" href="#settings"><Settings size={28} fill="#a8a29e" /></SideItem>
          <Account><Mark $round>MC</Mark><div><strong>Maya Chen</strong>maya@northwind.dev</div><ChevronsUpDown size={28} /></Account>
        </SideBottom>
      </Side>
      <Page>
        <Crumbs>
          <PanelLeft size={30} /><CrumbRule /><span>Northwind</span><ChevronRight size={16} /><span>Roadmap</span><ChevronRight size={16} />
          <SquareKanban size={32} color="#d97d1c" fill="#e9a050" /><strong>Bulk invoice export (CSV, XLSX, PDF bundle)</strong>
        </Crumbs>
        <PageBody>
          <Gallery><BackShot /><BackShot /><BackShot night /></Gallery>
          <Tasks>
            <label><input type="checkbox" tabIndex={-1} />XLSX writer with 50k-row splitting</label>
            <AddRow><input placeholder="Add subtask…" aria-label="Add subtask" tabIndex={-1} /><button tabIndex={-1}>Add</button></AddRow>
          </Tasks>
        </PageBody>
      </Page>
    </Shell>
  );
}

export default function App() {
  return (
    <>
      <Global />
      <Workspace />
      <Overlay>
        <Dialog role="dialog" aria-modal="true" aria-labelledby="shot-title">
          <Head>
            <Title id="shot-title">Invoices list · Default</Title>
            <Changed>Changed</Changed>
            <Env><Sun size={28} strokeWidth={2} /><Monitor size={28} strokeWidth={2} /><Lang>EN</Lang></Env>
            <Route>/invoices</Route>
            <Count>1 / 10</Count>
          </Head>
          <Close aria-label="Close"><X size={30} strokeWidth={2} /></Close>
          <Viewer>
            <Arrow aria-label="Previous screenshot" disabled><ChevronLeft size={30} /></Arrow>
            <Stage>
              <Figure><figcaption>Before</figcaption><InvoiceApp /></Figure>
              <Figure><figcaption>After</figcaption><InvoiceApp withExport /></Figure>
            </Stage>
            <Arrow aria-label="Next screenshot"><ChevronRight size={30} /></Arrow>
          </Viewer>
          <Info>
            <Modes>
              <Mode $active>Side by side</Mode><Mode>Before</Mode><Mode>After</Mode>
            </Modes>
            <Note>New Export button next to New invoice, plus a checkbox column for picking rows.</Note>
            <FullSize href="#full"><IconOpen />Open full size</FullSize>
          </Info>
          <Strip>
            {scenes.map(([name, art], i) => (
              <Thumb key={name} $active={i === 0} aria-label={name}><svg viewBox="0 0 156 98">{art}</svg></Thumb>
            ))}
          </Strip>
          <Review>
            <Form onSubmit={(e) => e.preventDefault()}>
              <Line>
                <Action type="button" $kind="outline"><Check size={28} />Approve</Action>
                <Trash type="button" aria-label="Delete comment"><IconTrash /></Trash>
              </Line>
              <Comment aria-label="Comment" defaultValue="Looks right. Can the Export button show the row count, e.g. “Export 214”, so people know what they are about to download?" />
              <Line>
                <Action $kind="primary">Send</Action>
                <Action type="button">Cancel</Action>
              </Line>
            </Form>
            <p>Use ← → to move between screenshots</p>
          </Review>
        </Dialog>
      </Overlay>
    </>
  );
}
